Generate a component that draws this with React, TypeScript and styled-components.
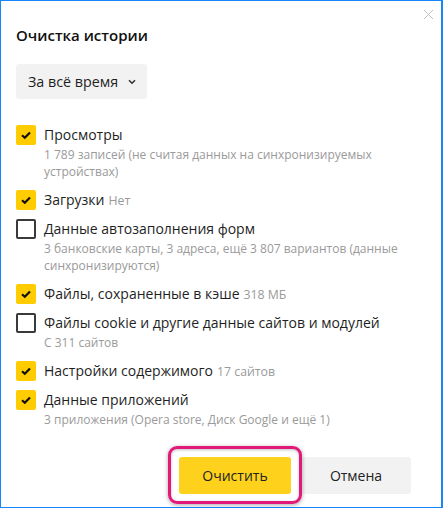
import React from 'react';
import styled, { createGlobalStyle } from 'styled-components';

const GlobalStyle = createGlobalStyle`
  html, body {
    margin: 0;
    padding: 0;
    background: #ffffff;
  }
  * {
    box-sizing: border-box;
  }
`;

const Dialog = styled.div`
  position: relative;
  width: 443px;
  height: 508px;
  border: 1px solid #1785fb;
  border-right-width: 2px;
  background: #ffffff;
  padding: 24px 30px 0 15px;
  font-family: 'Open Sans', 'Noto Sans', sans-serif;
  color: #1f1f1f;
  display: flex;
  flex-direction: column;
`;

const CloseButton = styled.button`
  position: absolute;
  top: 8px;
  right: 7px;
  width: 11px;
  height: 11px;
  padding: 0;
  border: none;
  background: none;
  color: #c2c2c2;
  cursor: pointer;
  display: flex;
`;

const Title = styled.h1`
  margin: 0;
  font-size: 15px;
  font-weight: 600;
  line-height: 20px;
  color: #111;
`;

const PeriodSelect = styled.button`
  margin-top: 19px;
  align-self: flex-start;
  height: 35px;
  width: 131px;
  padding: 0 0 0 12px;
  border: none;
  border-radius: 3px;
  background: #f2f2f2;
  display: flex;
  align-items: center;
  gap: 10px;
  font-family: inherit;
  font-size: 14.3px;
  color: #1f1f1f;
`;

const List = styled.div`
  margin-top: 26px;
  display: flex;
  flex-direction: column;
  gap: 8px;
`;

const Item = styled.label`
  display: flex;
  gap: 8px;
  align-items: flex-start;
`;

const Box = styled.span<{ $checked: boolean }>`
  flex-shrink: 0;
  width: 20px;
  height: 20px;
  border-radius: 2px;
  display: flex;
  align-items: center;
  justify-content: center;
  background: ${({ $checked }) => ($checked ? '#ffcc00' : '#ffffff')};
  border: ${({ $checked }) => ($checked ? 'none' : '2px solid #3a3a3a')};
`;

const Body = styled.div`
  display: flex;
  flex-direction: column;
`;

const Label = styled.div`
  font-size: 14px;
  line-height: 20px;
  color: #1f1f1f;
`;

const Note = styled.span`
  font-size: 12.3px;
  color: #9a9a9a;
  margin-left: 4px;
`;

const Sub = styled.div`
  margin-top: 1px;
  padding-bottom: 2px;
  font-size: 12px;
  line-height: 17px;
  color: #9a9a9a;
`;

const Footer = styled.div`
  margin-top: auto;
  margin-bottom: 13px;
  display: flex;
  justify-content: flex-end;
  gap: 10px;
`;

const Button = styled.button<{ $primary?: boolean }>`
  height: 37px;
  width: ${({ $primary }) => ($primary ? '112px' : '110px')};
  border: none;
  border-radius: 3px;
  font-family: inherit;
  font-size: 14px;
  color: #222;
  background: ${({ $primary }) => ($primary ? '#fed21c' : '#f2f2f2')};
  cursor: pointer;
`;

const Highlight = styled.div`
  position: absolute;
  left: -11px;
  top: -11px;
  right: -11px;
  bottom: -10px;
  border: 3px solid #e3197a;
  border-radius: 9px;
  box-shadow: 0 1px 4px rgba(0, 0, 0, 0.35), inset 0 1px 3px rgba(0, 0, 0, 0.25);
  pointer-events: none;
`;

const PrimaryWrap = styled.div`
  position: relative;
  display: flex;
`;

const Check = () => (
  <svg width="14" height="14" viewBox="0 0 14 14">
    <path d="M3 7.2 L5.8 9.8 L11 4.5" fill="none" stroke="#111" strokeWidth="2.2" />
  </svg>
);

type Entry = {
  label: string;
  checked: boolean;
  note?: string;
  sub?: string;
};

const entries: Entry[] = [
  {
    label: 'Просмотры',
    checked: true,
    sub: '1 789 записей (не считая данных на синхронизируемых устройствах)',
  },
  { label: 'Загрузки', checked: true, note: 'Нет' },
  {
    label: 'Данные автозаполнения форм',
    checked: false,
    sub: '3 банковские карты, 3 адреса, ещё 3 807 вариантов (данные синхронизируются)',
  },
  { label: 'Файлы, сохраненные в кэше', checked: true, note: '318 МБ' },
  { label: 'Файлы cookie и другие данные сайтов и модулей', checked: false, sub: 'С 311 сайтов' },
  { label: 'Настройки содержимого', checked: true, note: '17 сайтов' },
  {
    label: 'Данные приложений',
    checked: true,
    sub: '3 приложения (Opera store, Диск Google и ещё 1)',
  },
];

export default function App() {
  return (
    <>
      <GlobalStyle />
      <Dialog>
        <CloseButton aria-label="Закрыть">
          <svg width="11" height="11" viewBox="0 0 11 11">
            <path d="M1 1 L10 10 M10 1 L1 10" stroke="currentColor" strokeWidth="1" />
          </svg>
        </CloseButton>
        <Title>Очистка истории</Title>
        <PeriodSelect>
          За всё время
          <svg width="8" height="6" viewBox="0 0 8 6">
            <path d="M1 1.2 L4 4.2 L7 1.2" fill="none" stroke="#333" strokeWidth="1.6" />
          </svg>
        </PeriodSelect>
        <List>
          {entries.map((e) => (
            <Item key={e.label}>
              <Box $checked={e.checked}>{e.checked && <Check />}</Box>
              <Body>
                <Label>
                  {e.label}
                  {e.note && <Note>{e.note}</Note>}
                </Label>
                {e.sub && <Sub>{e.sub}</Sub>}
              </Body>
            </Item>
          ))}
        </List>
        <Footer>
          <PrimaryWrap>
            <Button $primary>Очистить</Button>
            <Highlight />
          </PrimaryWrap>
          <Button>Отмена</Button>
        </Footer>
      </Dialog>
    </>
  );
}
